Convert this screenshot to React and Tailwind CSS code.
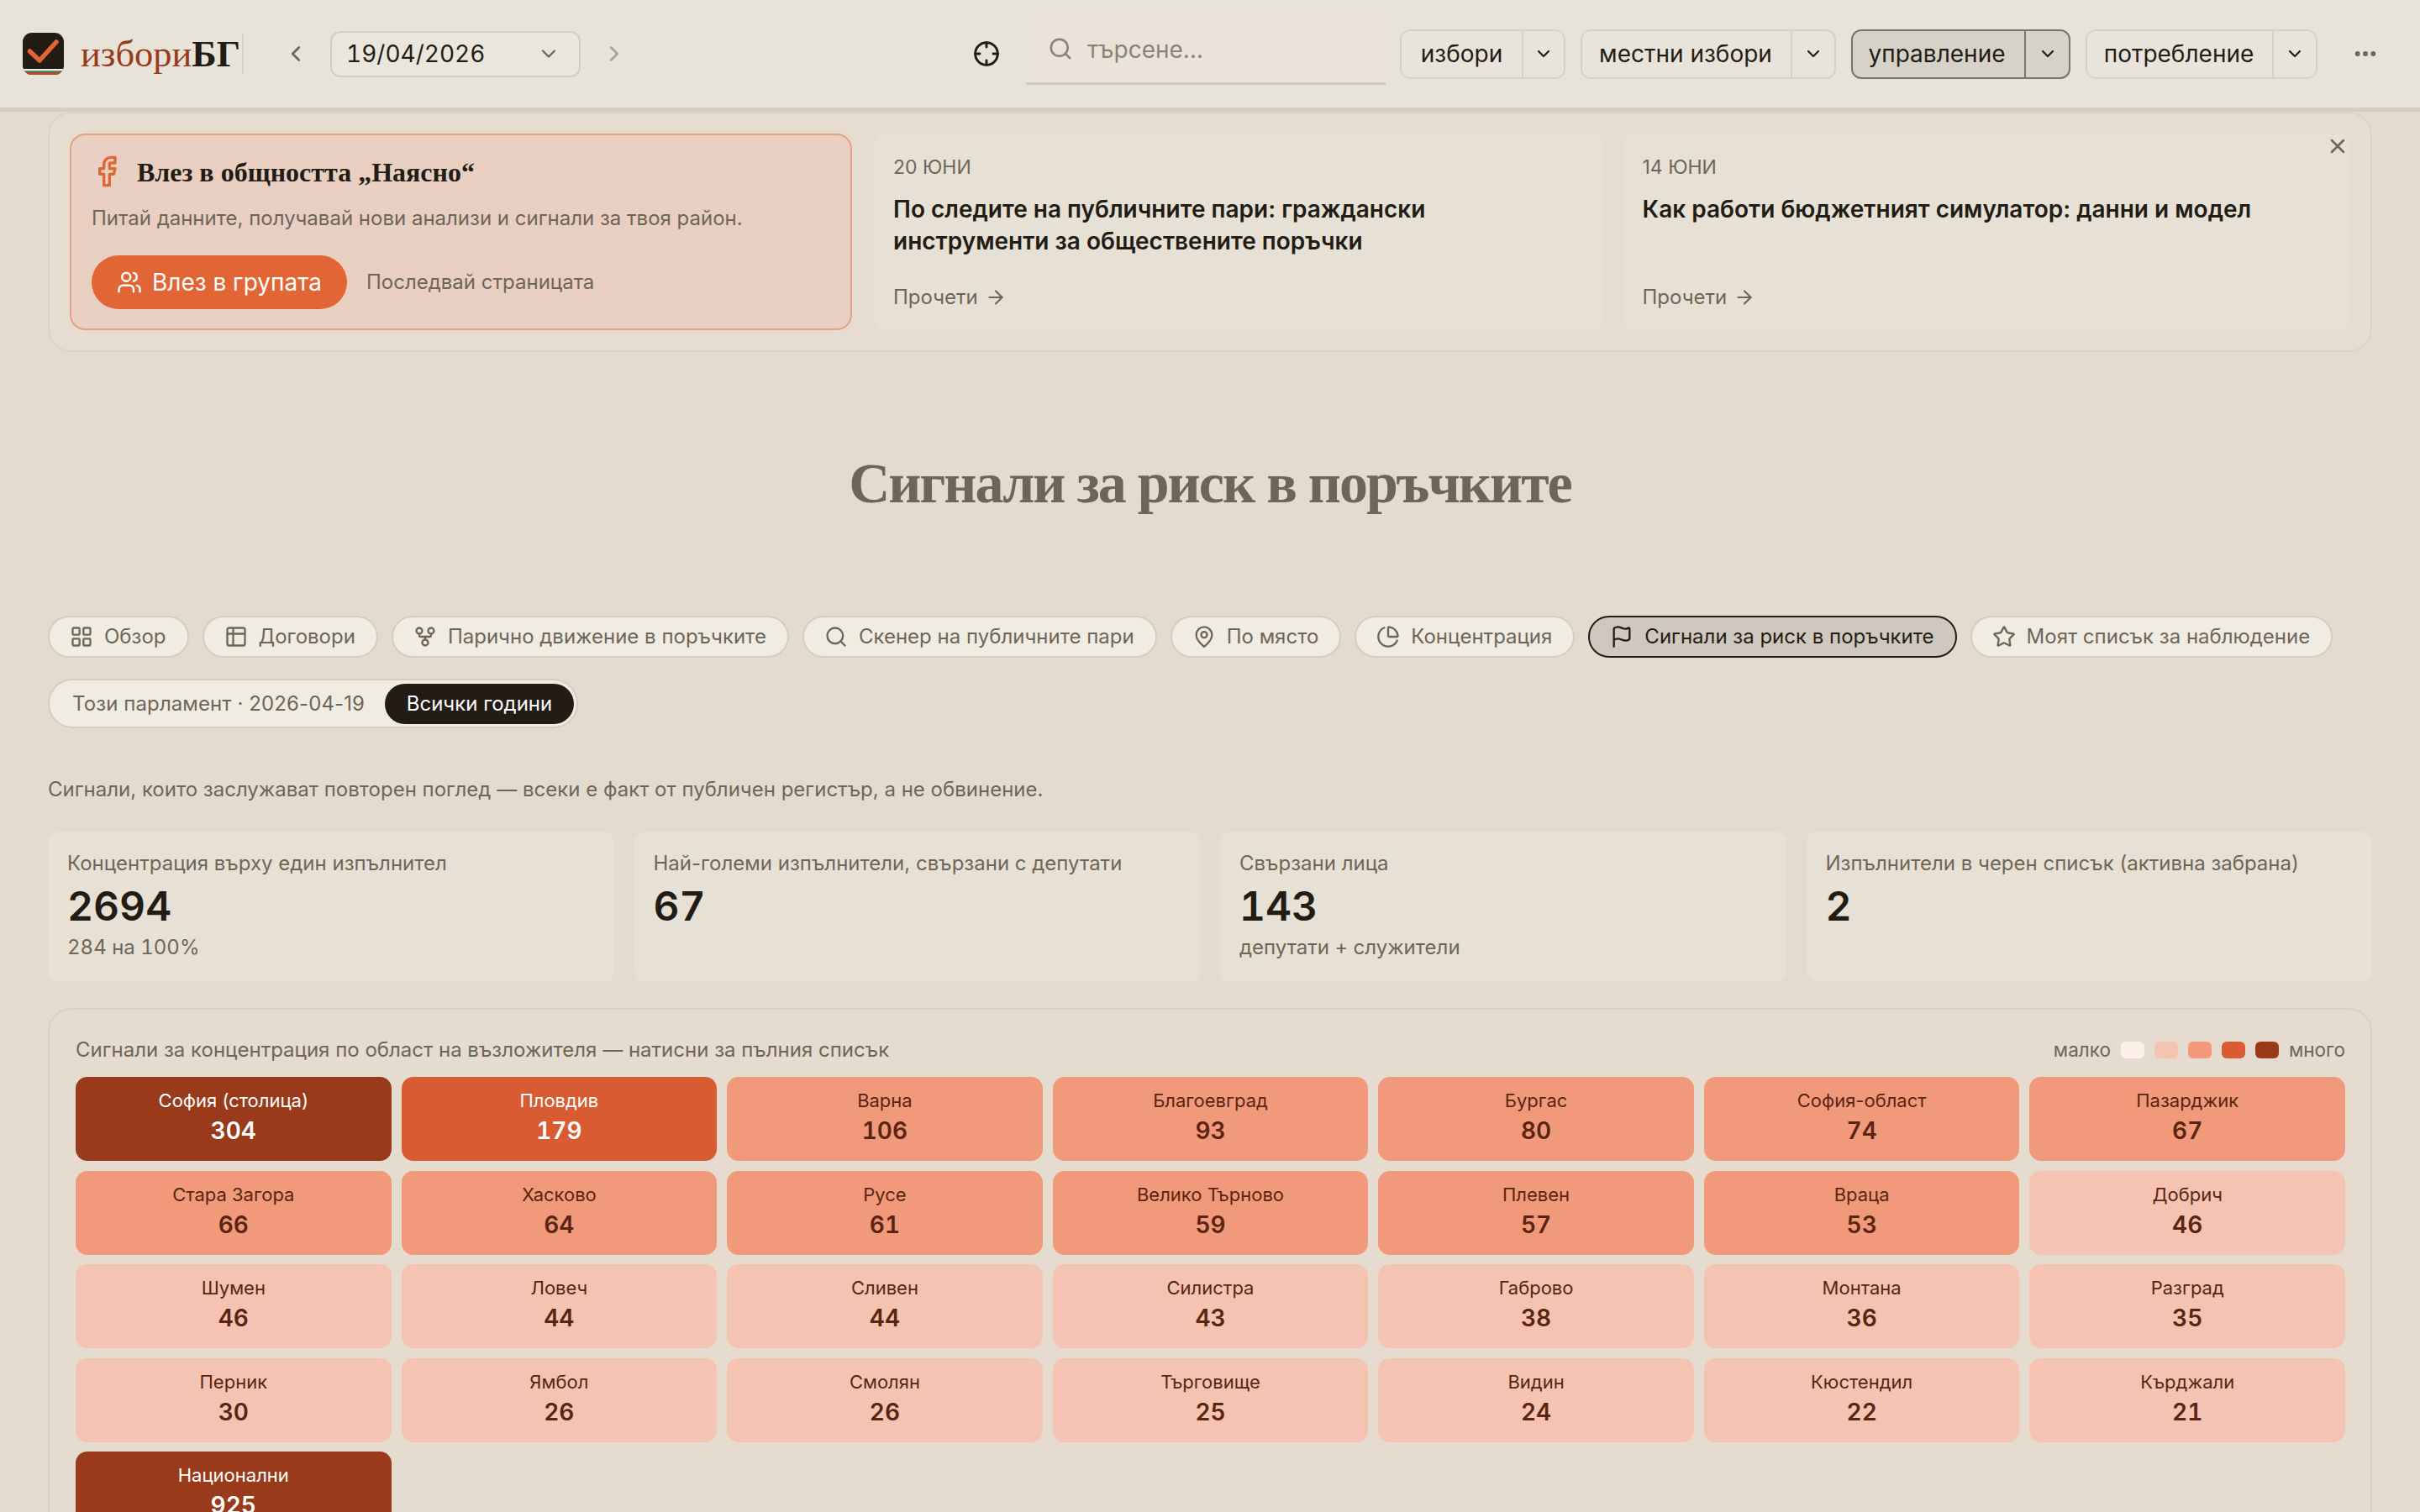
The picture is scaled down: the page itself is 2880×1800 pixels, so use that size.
import React from "react";
import {
  ArrowRight,
  ChartPie,
  ChevronDown,
  ChevronLeft,
  ChevronRight,
  Crosshair,
  Ellipsis,
  Facebook,
  Flag,
  GitFork,
  LayoutGrid,
  MapPin,
  Search,
  Star,
  Table2,
  Users,
  X,
} from "lucide-react";

const navItems = [
  { label: "избори", w: "w-[197px]", text: "w-[143px]" },
  { label: "местни избори", w: "w-[304px]", text: "w-[248px]", pad: "pr-[2px]" },
  { label: "управление", w: "w-[261px]", text: "w-[204px]", pad: "pr-[4px]", active: true },
  { label: "потребление", w: "w-[276px]", text: "w-[220px]", pad: "pr-[2px]" },
];

const tabs = [
  { label: "Обзор", icon: LayoutGrid },
  { label: "Договори", icon: Table2 },
  { label: "Парично движение в поръчките", icon: GitFork },
  { label: "Скенер на публичните пари", icon: Search },
  { label: "По място", icon: MapPin },
  { label: "Концентрация", icon: ChartPie },
  { label: "Сигнали за риск в поръчките", icon: Flag, active: true },
  { label: "Моят списък за наблюдение", icon: Star },
];

const stats = [
  { label: "Концентрация върху един изпълнител", value: "2694", sub: "284 на 100%" },
  { label: "Най-големи изпълнители, свързани с депутати", value: "67" },
  { label: "Свързани лица", value: "143", sub: "депутати + служители" },
  { label: "Изпълнители в черен списък (активна забрана)", value: "2" },
];

const levelStyles = {
  4: "bg-[#993a1a] text-white",
  3: "bg-[#d95b32] text-white",
  2: "bg-[#f09a7b] text-[#5a2410]",
  1: "bg-[#f5c3b1] text-[#5a2410]",
};

const regions = [
  ["София (столица)", 304, 4],
  ["Пловдив", 179, 3],
  ["Варна", 106, 2],
  ["Благоевград", 93, 2],
  ["Бургас", 80, 2],
  ["София-област", 74, 2],
  ["Пазарджик", 67, 2],
  ["Стара Загора", 66, 2],
  ["Хасково", 64, 2],
  ["Русе", 61, 2],
  ["Велико Търново", 59, 2],
  ["Плевен", 57, 2],
  ["Враца", 53, 2],
  ["Добрич", 46, 1],
  ["Шумен", 46, 1],
  ["Ловеч", 44, 1],
  ["Сливен", 44, 1],
  ["Силистра", 43, 1],
  ["Габрово", 38, 1],
  ["Монтана", 36, 1],
  ["Разград", 35, 1],
  ["Перник", 30, 1],
  ["Ямбол", 26, 1],
  ["Смолян", 26, 1],
  ["Търговище", 25, 1],
  ["Видин", 24, 1],
  ["Кюстендил", 22, 1],
  ["Кърджали", 21, 1],
  ["Национални", 925, 4],
];

const Logo = () => (
  <svg width="49" height="50" viewBox="0 0 49 50" className="shrink-0 -ml-[1px]">
    <clipPath id="logo-clip">
      <rect width="49" height="50" rx="11" />
    </clipPath>
    <g clipPath="url(#logo-clip)">
      <rect width="49" height="50" fill="#231c15" />
      <rect y="43" width="49" height="2.5" fill="#f3efe8" />
      <rect y="45.5" width="49" height="1.5" fill="#2f8f7a" />
      <rect y="47" width="49" height="3" fill="#b5472a" />
    </g>
    <path d="M8.5 22L20 33L40 11" fill="none" stroke="#e26535" strokeWidth="5.5" strokeLinecap="round" strokeLinejoin="round" />
  </svg>
);

const ArticleCard = ({ date, title }) => (
  <a className="bg-[#e7e1d5] rounded-[14px] px-[22px] pt-[26px] pb-[24px] flex flex-col">
    <div className="text-[23px] leading-[28px] text-[#6e6558]">{date}</div>
    <div className="mt-[17px] text-[28px] leading-[38px] font-semibold text-[#231c15] h-[76px]">{title}</div>
    <div className="mt-auto flex items-center gap-[8px] text-[24px] leading-[30px] text-[#6e6558]">
      Прочети <ArrowRight size={26} strokeWidth={2} />
    </div>
  </a>
);

export default function App() {
  return (
    <div className="w-[2880px] h-[1800px] overflow-hidden bg-[#e4dbcf] font-['Inter',sans-serif] text-[#231c15]">
      <header className="h-[133px] bg-[#e8e3d9] border-b-[5px] border-[#d4cdc0] flex items-center pl-[28px]">
        <Logo />
        <div className="ml-[20px] font-['Liberation_Serif',serif] text-[44.5px] leading-[50px] text-[#993a1a] w-[189px]">
          избори<span className="font-bold text-[#231c15]">БГ</span>
        </div>
        <div className="ml-[3px] w-[2px] h-[48px] bg-[#d8d2c6]" />
        <ChevronLeft size={30} strokeWidth={2.2} className="ml-[47px] text-[#6e6558]" />
        <div className="ml-[26px] w-[298px] h-[55px] rounded-[12px] border-2 border-[#d4cdc0] bg-[#ebe6dd] flex items-center justify-between pl-[17px] pr-[22px] text-[28px] tabular-nums">
          <span>19/04/2026</span>
          <ChevronDown size={28} className="text-[#6e6558]" />
        </div>
        <ChevronRight size={30} strokeWidth={2.2} className="ml-[25px] text-[#a8a296]" />
        <Crosshair size={32} strokeWidth={2.2} className="ml-[412px] text-[#231c15]" />
        <div className="ml-[31px] mb-[12px] w-[428px] h-[85px] bg-[#e9e3da] border-b-[3px] border-[#d0c9bc] flex items-center pl-[26px] pt-[4px] gap-[17px] text-[28px] text-[#8a8274]">
          <Search size={30} strokeWidth={2} className="-mt-[1px]" />
          <span className="mt-[1px] text-[#8a8274]">търсене...</span>
        </div>
        <div className="ml-[17px] flex gap-[18px]">
          {navItems.map((item) => (
            <div
              key={item.label}
              className={`${item.w} h-[59px] rounded-[12px] border-2 flex items-center text-[28px] ${
                item.active ? "bg-[#d7d2c9] border-[#7b7468]" : "bg-[#e9e4db] border-[#d8d2c6]"
              }`}
            >
              <span className={`${item.text} ${item.pad || ""} shrink-0 text-center`}>{item.label}</span>
              <span
                className={`h-full flex-1 flex items-center justify-center border-l-2 ${
                  item.active ? "border-[#7b7468]" : "border-[#d8d2c6]"
                }`}
              >
                <ChevronDown size={24} strokeWidth={2.2} />
              </span>
            </div>
          ))}
        </div>
        <Ellipsis size={32} strokeWidth={2.4} className="ml-[41px] text-[#6e6558]" />
      </header>

      <main className="px-[57px]">
        <section className="relative h-[286px] rounded-[28px] border-2 border-[#dcd4c8] bg-[#e6ddd0] p-[24px] grid grid-cols-[931px_1fr_1fr] gap-[27px]">
          <div className="rounded-[18px] border-2 border-[#e4a283] bg-[#e8cfc2] px-[24px] pt-[24px]">
            <div className="flex items-center gap-[16px]">
              <Facebook size={40} strokeWidth={2} className="text-[#e26535] -mt-[2px] -ml-[2px]" />
              <div className="font-['Liberation_Serif',serif] font-bold text-[32px] leading-[40px]">
                Влез в общността „Наясно“
              </div>
            </div>
            <div className="mt-[18px] text-[24px] leading-[34px] text-[#6e6558]">
              Питай данните, получавай нови анализи и сигнали за твоя район.
            </div>
            <div className="mt-[27px] flex items-center gap-[23px]">
              <button
                type="button"
                className="h-[64px] w-[304px] rounded-full bg-[#e26535] text-white text-[28px] flex items-center justify-center gap-[12px]"
              >
                <Users size={30} strokeWidth={2} />
                Влез в групата
              </button>
              <span className="text-[24px] text-[#6e6558]">Последвай страницата</span>
            </div>
          </div>
          <ArticleCard date="20 ЮНИ" title="По следите на публичните пари: граждански инструменти за обществените поръчки" />
          <ArticleCard date="14 ЮНИ" title="Как работи бюджетният симулатор: данни и модел" />
          <X size={28} strokeWidth={2.2} className="absolute right-[25px] top-[25px] text-[#6e6558]" />
        </section>

        <h1 className="mt-[116px] text-center font-['Liberation_Serif',serif] font-bold text-[68px] leading-[80px] tracking-[-2px] text-[#6e6558]">
          Сигнали за риск в поръчките
        </h1>

        <nav className="mt-[118px] flex gap-[16px]">
          {tabs.map(({ label, icon: Icon, active }) => (
            <div
              key={label}
              className={`h-[50px] pl-[24px] pr-[25px] rounded-full border-2 flex items-center gap-[13px] text-[24px] whitespace-nowrap ${
                active
                  ? "bg-[#cfc8be] border-[#231c15] text-[#231c15]"
                  : "bg-[#f0ece2] border-[#d4cdc0] text-[#6e6558]"
              }`}
            >
              <Icon size={28} strokeWidth={2} className="shrink-0" />
              {label}
            </div>
          ))}
        </nav>

        <div className="mt-[25px] inline-flex items-center h-[59px] rounded-full border-2 border-[#d4cdc0] bg-[#f0ece2] pl-[27px] pr-[3px] text-[24px]">
          <span className="text-[#6e6558] tracking-[0.1px]">Този парламент · 2026-04-19</span>
          <span className="ml-[24px] h-[48px] w-[225px] rounded-full bg-[#231c15] text-white flex items-center justify-center">
            Всички години
          </span>
        </div>

        <p className="mt-[55px] text-[24px] leading-[36px] text-[#6e6558]">
          Сигнали, които заслужават повторен поглед — всеки е факт от публичен регистър, а не обвинение.
        </p>

        <div className="mt-[32px] grid grid-cols-4 gap-[24px]">
          {stats.map((stat) => (
            <div key={stat.label} className="h-[179px] rounded-[14px] bg-[#e7e1d5] px-[23px] pt-[20px]">
              <div className="text-[24px] leading-[36px] text-[#6e6558]">{stat.label}</div>
              <div className="mt-[3px] text-[48px] leading-[60px] font-semibold tabular-nums">{stat.value}</div>
              {stat.sub && <div className="mt-[1px] text-[24px] leading-[36px] text-[#6e6558] tabular-nums">{stat.sub}</div>}
            </div>
          ))}
        </div>

        <section className="mt-[31px] rounded-[28px] border-2 border-[#d9d1c5] bg-[#e5dccf] pl-[31px] pr-[30px] pt-[29px] pb-[32px]">
          <div className="flex items-center justify-between h-[38px] mb-[13px]">
            <span className="text-[24px] text-[#6e6558]">
              Сигнали за концентрация по област на възложителя — натисни за пълния списък
            </span>
            <span className="flex items-center gap-[12px] text-[22.5px] text-[#6e6558]">
              малко
              <span className="w-[28px] h-[20px] rounded-[6px] bg-[#fbefe8]" />
              <span className="w-[28px] h-[20px] rounded-[6px] bg-[#f5c3b1]" />
              <span className="w-[28px] h-[20px] rounded-[6px] bg-[#f09a7b]" />
              <span className="w-[28px] h-[20px] rounded-[6px] bg-[#d95b32]" />
              <span className="w-[28px] h-[20px] rounded-[6px] bg-[#993a1a]" />
              много
            </span>
          </div>
          <div className="grid grid-cols-7 gap-x-[12px] gap-y-[11.6px]">
            {regions.map(([name, count, level]) => (
              <div
                key={name}
                className={`h-[100px] rounded-[14px] pt-[12px] flex flex-col items-center ${levelStyles[level]}`}
              >
                <span className="text-[22px] leading-[32px]">{name}</span>
                <span className="mt-[2px] text-[28px] leading-[36px] font-semibold tabular-nums">{count}</span>
              </div>
            ))}
          </div>
        </section>
      </main>
    </div>
  );
}
